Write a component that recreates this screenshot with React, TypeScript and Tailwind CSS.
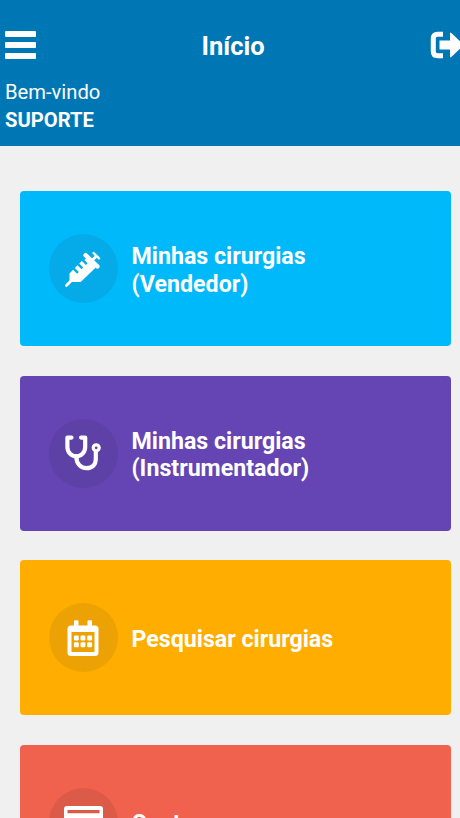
import type { ReactNode } from 'react'

interface MenuItem {
  title: string[]
  color: string
  circle: string
  icon: ReactNode
}

function SyringeIcon() {
  return (
    <svg width="36" height="36" viewBox="0 0 36 36" fill="none" stroke="#fff">
      <path d="M1.400 34.600 7 29" strokeWidth="2.800" strokeLinecap="round" />
      <path
        d="M4.500 30.800V22.500l3.600-3.800 4 4 1.700-1.700-4-4 2.700-2.700 4 4 1.700-1.700-4-4 2.700-2.700 4 4 1.700-1.700-3.200-3.200 2-2L31 16.200 16.500 30.200q-1 .9-2.500.9H7z"
        fill="#fff"
        stroke="none"
      />
      <path d="M20.600 4.200 32.400 15.400" strokeWidth="4.400" strokeLinecap="round" />
      <path d="m27.500 9 4-4" strokeWidth="2.800" />
      <path d="m28.600 2 5.400 5.400" strokeWidth="2.400" strokeLinecap="round" />
    </svg>
  )
}

function StethoscopeIcon() {
  return (
    <svg width="36" height="36" viewBox="0 0 36 36" fill="none" stroke="#fff" strokeWidth="4.200" strokeLinecap="round" strokeLinejoin="round">
      <path d="M6.500 2.600H2.400v9.400c0 5.200 3.900 9.400 8.900 9.400s8.900-4.200 8.900-9.400V2.600h-4.100" />
      <path d="M11.300 21.400c0 7 4.200 11.800 10.300 11.800 5.600 0 9.200-3.600 9.200-9.100v-7" />
      <circle cx="31.200" cy="12.800" r="3" strokeWidth="3.200" />
    </svg>
  )
}

function CalendarIcon() {
  return (
    <svg width="32" height="36" viewBox="0 0 32 36">
      <path
        fill="#fff"
        fillRule="evenodd"
        d="M7 1.300Q7 .3 8 .3h2.500q1 0 1 1v4.200h9V1.300q0-1 1-1H24q1 0 1 1v4.200h3a3.500 3.500 0 0 1 3.500 3.500v23.500A3.500 3.500 0 0 1 28 36H4a3.500 3.500 0 0 1-3.500-3.500V9A3.500 3.500 0 0 1 4 5.500h3zM4.500 12v20h23V12z"
      />
      <g fill="#fff">
        <rect x="6.900" y="15.500" width="4.900" height="4.900" rx="1.200" />
        <rect x="13.550" y="15.500" width="4.900" height="4.900" rx="1.200" />
        <rect x="20.200" y="15.500" width="4.900" height="4.900" rx="1.200" />
        <rect x="6.900" y="22.300" width="4.900" height="4.900" rx="1.200" />
        <rect x="13.550" y="22.300" width="4.900" height="4.900" rx="1.200" />
        <rect x="20.200" y="22.300" width="4.900" height="4.900" rx="1.200" />
      </g>
    </svg>
  )
}

function CardIcon() {
  return (
    <svg width="39" height="32" viewBox="0 0 39 32">
      <path
        fill="#fff"
        fillRule="evenodd"
        d="M3 0h33a3 3 0 0 1 3 3v26a3 3 0 0 1-3 3H3a3 3 0 0 1-3-3V3a3 3 0 0 1 3-3zM3.500 4v3.200h32V4z"
      />
    </svg>
  )
}

const items: MenuItem[] = [
  { title: ['Minhas cirurgias', '(Vendedor)'], color: 'bg-[#00b9fb]', circle: 'bg-[#05abe8]', icon: <SyringeIcon /> },
  { title: ['Minhas cirurgias', '(Instrumentador)'], color: 'bg-[#6545b4]', circle: 'bg-[#5e41a6]', icon: <StethoscopeIcon /> },
  { title: ['Pesquisar cirurgias'], color: 'bg-[#ffae00]', circle: 'bg-[#eca204]', icon: <CalendarIcon /> },
  { title: ['Contas'], color: 'bg-[#f0624d]', circle: 'bg-[#dc5b48]', icon: <CardIcon /> },
]

function Header() {
  return (
    <header className="h-[146px] bg-[#0077b5] pt-[29px] text-white">
      <div className="flex h-8 items-center justify-between pl-[5px]">
        <button type="button" aria-label="Menu" className="flex w-[31px] flex-col gap-[5px]">
          <span className="h-[6px] rounded-[1px] bg-white" />
          <span className="h-[6px] rounded-[1px] bg-white" />
          <span className="h-[6px] rounded-[1px] bg-white" />
        </button>
        <h1 className="pt-[2px] text-[25.500px] leading-8 font-bold">Início</h1>
        <button type="button" aria-label="Sair" className="h-[28px] w-[30px] overflow-hidden">
          <svg width="34" height="28" viewBox="0 0 34 28">
            <path d="M13 3.300H7.500q-4.200 0-4.200 4.200v13q0 4.200 4.200 4.200H13" fill="none" stroke="#fff" strokeWidth="5" />
            <path d="M9.500 9.500H20V2.500q0-1.500 1.300-.5L34 14 21.300 26q-1.300 1-1.300-.5v-7H9.500z" fill="#fff" />
          </svg>
        </button>
      </div>
      <div className="pt-[18px] pl-[5px] text-[20.200px] leading-[27.500px]">
        <p>Bem-vindo</p>
        <p className="font-bold">SUPORTE</p>
      </div>
    </header>
  )
}

export default function App() {
  return (
    <div className="h-[818px] w-[460px] overflow-hidden bg-[#f0f0f0] font-['Roboto',sans-serif]">
      <Header />
      <main className="flex flex-col gap-[29.500px] pt-[45px] pr-[9px] pl-5">
        {items.map((item) => (
          <section key={item.color} className={`flex h-[155px] shrink-0 items-center gap-[14px] rounded-[4px] pl-[28.500px] ${item.color}`}>
            <div className={`flex size-[69px] shrink-0 items-center justify-center rounded-full ${item.circle}`}>{item.icon}</div>
            <h2 className="pt-[4px] text-[23.200px] leading-[27.500px] font-bold text-white">
              {item.title.map((line) => (
                <span key={line} className="block">{line}</span>
              ))}
            </h2>
          </section>
        ))}
      </main>
    </div>
  )
}
